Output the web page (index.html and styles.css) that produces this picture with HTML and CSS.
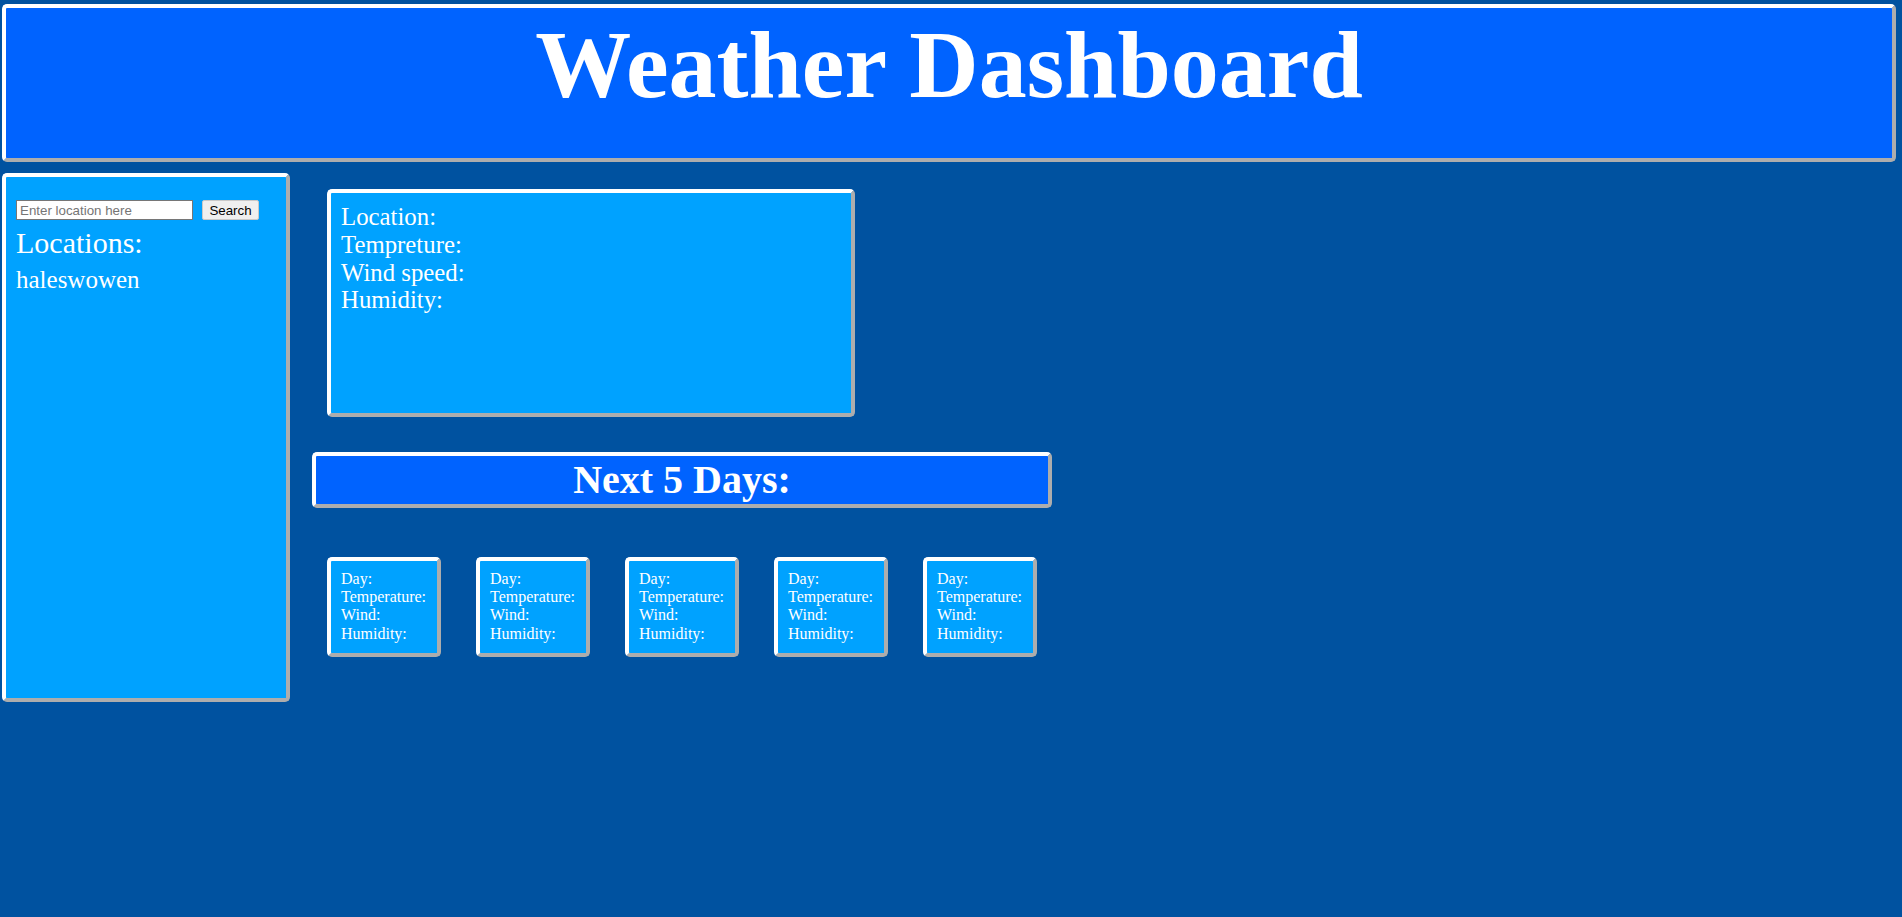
FILE: index.html
```html
<!DOCTYPE html>
<html lang="en">
<head>
<meta charset="utf-8">
<title>Weather Dashboard</title>
<link rel="stylesheet" href="styles.css">
</head>
<body>
<header class="top">
  <h1 class="title">Weather Dashboard</h1>
</header>
<div class="layout">
  <aside class="sidebar">
    <div class="search-row">
      <input class="search-input" type="text" placeholder="Enter location here">
      <button class="search-btn" type="button">Search</button>
    </div>
    <div class="locations-title">Locations:</div>
    <div class="location-item">haleswowen</div>
  </aside>
  <main class="content">
    <section class="box current">
      <div>Location:</div>
      <div>Tempreture:</div>
      <div>Wind speed:</div>
      <div>Humidity:</div>
    </section>
    <div class="next-bar"><h2 class="next-title">Next 5 Days:</h2></div>
    <div class="forecast">
      <div class="box day"><div>Day:</div><div>Temperature:</div><div>Wind:</div><div>Humidity:</div></div>
      <div class="box day"><div>Day:</div><div>Temperature:</div><div>Wind:</div><div>Humidity:</div></div>
      <div class="box day"><div>Day:</div><div>Temperature:</div><div>Wind:</div><div>Humidity:</div></div>
      <div class="box day"><div>Day:</div><div>Temperature:</div><div>Wind:</div><div>Humidity:</div></div>
      <div class="box day"><div>Day:</div><div>Temperature:</div><div>Wind:</div><div>Humidity:</div></div>
    </div>
  </main>
</div>
</body>
</html>
```
FILE: styles.css
```css
html, body {
  margin: 0;
  padding: 0;
}
body {
  background: #0052a0;
  color: #fff;
  font-family: "Liberation Serif", "Times New Roman", serif;
  min-height: 917px;
}
.top, .sidebar, .box, .next-bar {
  box-sizing: border-box;
  border: 4px solid;
  border-color: #fff #adadad #adadad #fff;
  border-radius: 5px;
}
.top {
  margin: 4px 6px 0 2px;
  height: 158px;
  background: #0063ff;
  text-align: center;
  padding-top: 1px;
}
.title {
  margin: 0;
  font-size: 96px;
  font-weight: bold;
  line-height: normal;
}
.layout {
  display: flex;
  align-items: flex-start;
  margin-top: 11px;
}
.sidebar {
  margin-left: 2px;
  width: 288px;
  height: 529px;
  background: #00a2ff;
  padding: 23px 10px 10px 10px;
}
.search-row {
  display: flex;
  gap: 9px;
}
.search-input {
  box-sizing: border-box;
  width: 177px;
  height: 20px;
  margin: 0;
  padding: 1px 3px;
  border: 1px solid #767676;
  background: #fff;
  font-family: "Liberation Sans", Arial, sans-serif;
  font-size: 13.33px;
  color: #000;
}
.search-input::placeholder {
  color: #757575;
}
.search-btn {
  box-sizing: border-box;
  width: 57px;
  height: 20px;
  margin: 0;
  padding: 0;
  border: 1px solid #c8c8c8;
  border-radius: 2px;
  background: #efefef;
  font-family: "Liberation Sans", Arial, sans-serif;
  font-size: 13.33px;
  color: #000;
}
.locations-title {
  margin-top: 6px;
  font-size: 30px;
  line-height: normal;
}
.location-item {
  margin-top: 6px;
  font-size: 25px;
  line-height: normal;
}
.content {
  margin-left: 22px;
  width: 740px;
}
.current {
  margin-top: 16px;
  margin-left: 15px;
  width: 528px;
  height: 228px;
  background: #00a2ff;
  padding: 10px 10px;
  font-size: 24.8px;
  line-height: 27.8px;
}
.next-bar {
  margin-top: 35px;
  width: 740px;
  height: 56px;
  background: #0063ff;
  text-align: center;
  padding: 1px 0;
}
.next-title {
  margin: 0;
  font-size: 40px;
  font-weight: bold;
  line-height: 46px;
}
.forecast {
  display: flex;
  gap: 35px;
  margin-top: 49px;
  margin-left: 15px;
}
.day {
  width: 114px;
  height: 100px;
  background: #00a2ff;
  padding: 9px 10px;
  font-size: 16px;
  line-height: 18.2px;
}
```
